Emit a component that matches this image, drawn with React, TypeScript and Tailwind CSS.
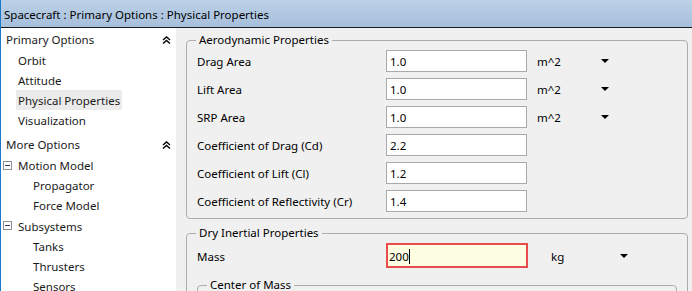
const aero = [
  { label: "Drag Area", value: "1.0", unit: "m^2" },
  { label: "Lift Area", value: "1.0", unit: "m^2" },
  { label: "SRP Area", value: "1.0", unit: "m^2" },
  { label: "Coefficient of Drag (Cd)", value: "2.2" },
  { label: "Coefficient of Lift (Cl)", value: "1.2" },
  { label: "Coefficient of Reflectivity (Cr)", value: "1.4" },
];

function DoubleChevron() {
  return (
    <svg width="9" height="8" viewBox="0 0 9 8" className="text-black">
      <path d="M1 4 L4.5 1 L8 4" fill="none" stroke="currentColor" strokeWidth="1.4" />
      <path d="M1 7.5 L4.5 4.5 L8 7.5" fill="none" stroke="currentColor" strokeWidth="1.4" />
    </svg>
  );
}

function Triangle() {
  return (
    <svg width="8" height="4" viewBox="0 0 8 4">
      <path d="M0 0 H8 L4 4 Z" fill="#000" />
    </svg>
  );
}

function MinusBox() {
  return (
    <span className="w-[9px] h-[9px] border border-[#919191] flex items-center justify-center bg-white">
      <span className="w-[5px] h-px bg-[#2b3b6b]"></span>
    </span>
  );
}

function Header({ text, className = "" }: { text: string; className?: string }) {
  return (
    <div className={`h-[22px] flex items-center justify-between pl-[5px] pr-[5px] pt-[1px] ${className}`}>
      <span>{text}</span>
      <DoubleChevron />
    </div>
  );
}

export default function App() {
  return (
    <div
      className="w-[692px] h-[291px] overflow-hidden bg-[#f0f0f0] border-l border-[#1979ca] text-[11.5px] text-black flex flex-col"
      style={{ fontFamily: '"Noto Sans", "Open Sans", sans-serif' }}
    >
      {/* Title bar */}
      <div className="h-[28px] shrink-0 bg-gradient-to-b from-[#bcd1e7] to-[#a6bfdb] border-b border-[#1a1a1a] flex items-center pl-[3px] pt-[3px]">
        Spacecraft : Primary Options : Physical Properties
      </div>

      <div className="flex flex-1 min-h-0">
        {/* Sidebar */}
        <div className="w-[175px] shrink-0 bg-white text-[#1a1a1a]">
          <Header text="Primary Options" />
          <div className="h-5 flex items-center pl-[17px] pt-[2px]">Orbit</div>
          <div className="h-5 flex items-center pl-[17px] pt-[2px]">Attitude</div>
          <div className="h-5 flex items-center pl-[15px]">
            <span className="bg-[#ebebeb] h-5 flex items-center px-[2px] pt-[2px]">Physical Properties</span>
          </div>
          <div className="h-5 flex items-center pl-[17px] pt-[2px]">Visualization</div>
          <Header text="More Options" className="mt-[3px]" />
          <div className="h-5 flex items-center pl-[2px] gap-[6px]">
            <MinusBox />
            <span className="pt-[2px]">Motion Model</span>
          </div>
          <div className="h-5 flex items-center pl-[32px] pt-[2px]">Propagator</div>
          <div className="h-5 flex items-center pl-[32px] pt-[2px]">Force Model</div>
          <div className="h-[21px] flex items-center pl-[2px] gap-[6px]">
            <MinusBox />
            <span className="pt-[2px]">Subsystems</span>
          </div>
          <div className="h-5 flex items-center pl-[32px] pt-[2px]">Tanks</div>
          <div className="h-5 flex items-center pl-[32px] pt-[2px]">Thrusters</div>
          <div className="h-5 flex items-center pl-[32px] pt-[2px]">Sensors</div>
        </div>

        {/* Content */}
        <div className="flex-1 pl-[10px] pr-[4px] pt-[4px]">
          <fieldset className="border border-[#adadad] rounded-[4px] pl-[10px] pr-[10px] pb-[6px]">
            <legend className="px-[3px] ml-[-1px] leading-4">Aerodynamic Properties</legend>
            <div className="flex flex-col gap-[6px] mt-[2px]">
              {aero.map((row) => (
                <div key={row.label} className="flex items-center h-[22px]">
                  <span className="w-[189px] shrink-0 pt-[2px]">{row.label}</span>
                  <div className="w-[141px] h-[22px] bg-white border border-[#a9a9a9] flex items-center pl-[3px] pt-[2px]">
                    {row.value}
                  </div>
                  {row.unit && (
                    <>
                      <span className="ml-[10px] w-[64px] pt-[2px]">{row.unit}</span>
                      <Triangle />
                    </>
                  )}
                </div>
              ))}
            </div>
          </fieldset>

          <fieldset className="mt-[6px] border border-[#adadad] rounded-[4px] pl-[10px] pr-[10px]">
            <legend className="px-[3px] ml-[-1px] leading-4">Dry Inertial Properties</legend>
            <div className="flex items-center h-[25px] mt-[2px]">
              <span className="w-[189px] shrink-0 pt-[2px]">Mass</span>
              <div className="w-[142px] h-[25px] bg-[#fefee3] border-2 border-[#e84c4c] flex items-center pl-[1px] pt-[2px]">
                200<span className="w-px h-[15px] bg-black"></span>
              </div>
              <span className="ml-[23px] w-[69px] pt-[2px]">kg</span>
              <Triangle />
            </div>
            <fieldset className="mt-[9px] border border-[#adadad] rounded-[4px] h-[60px] px-[10px]">
              <legend className="px-[3px] ml-[-1px] leading-4">Center of Mass</legend>
            </fieldset>
          </fieldset>
        </div>
      </div>
    </div>
  );
}
